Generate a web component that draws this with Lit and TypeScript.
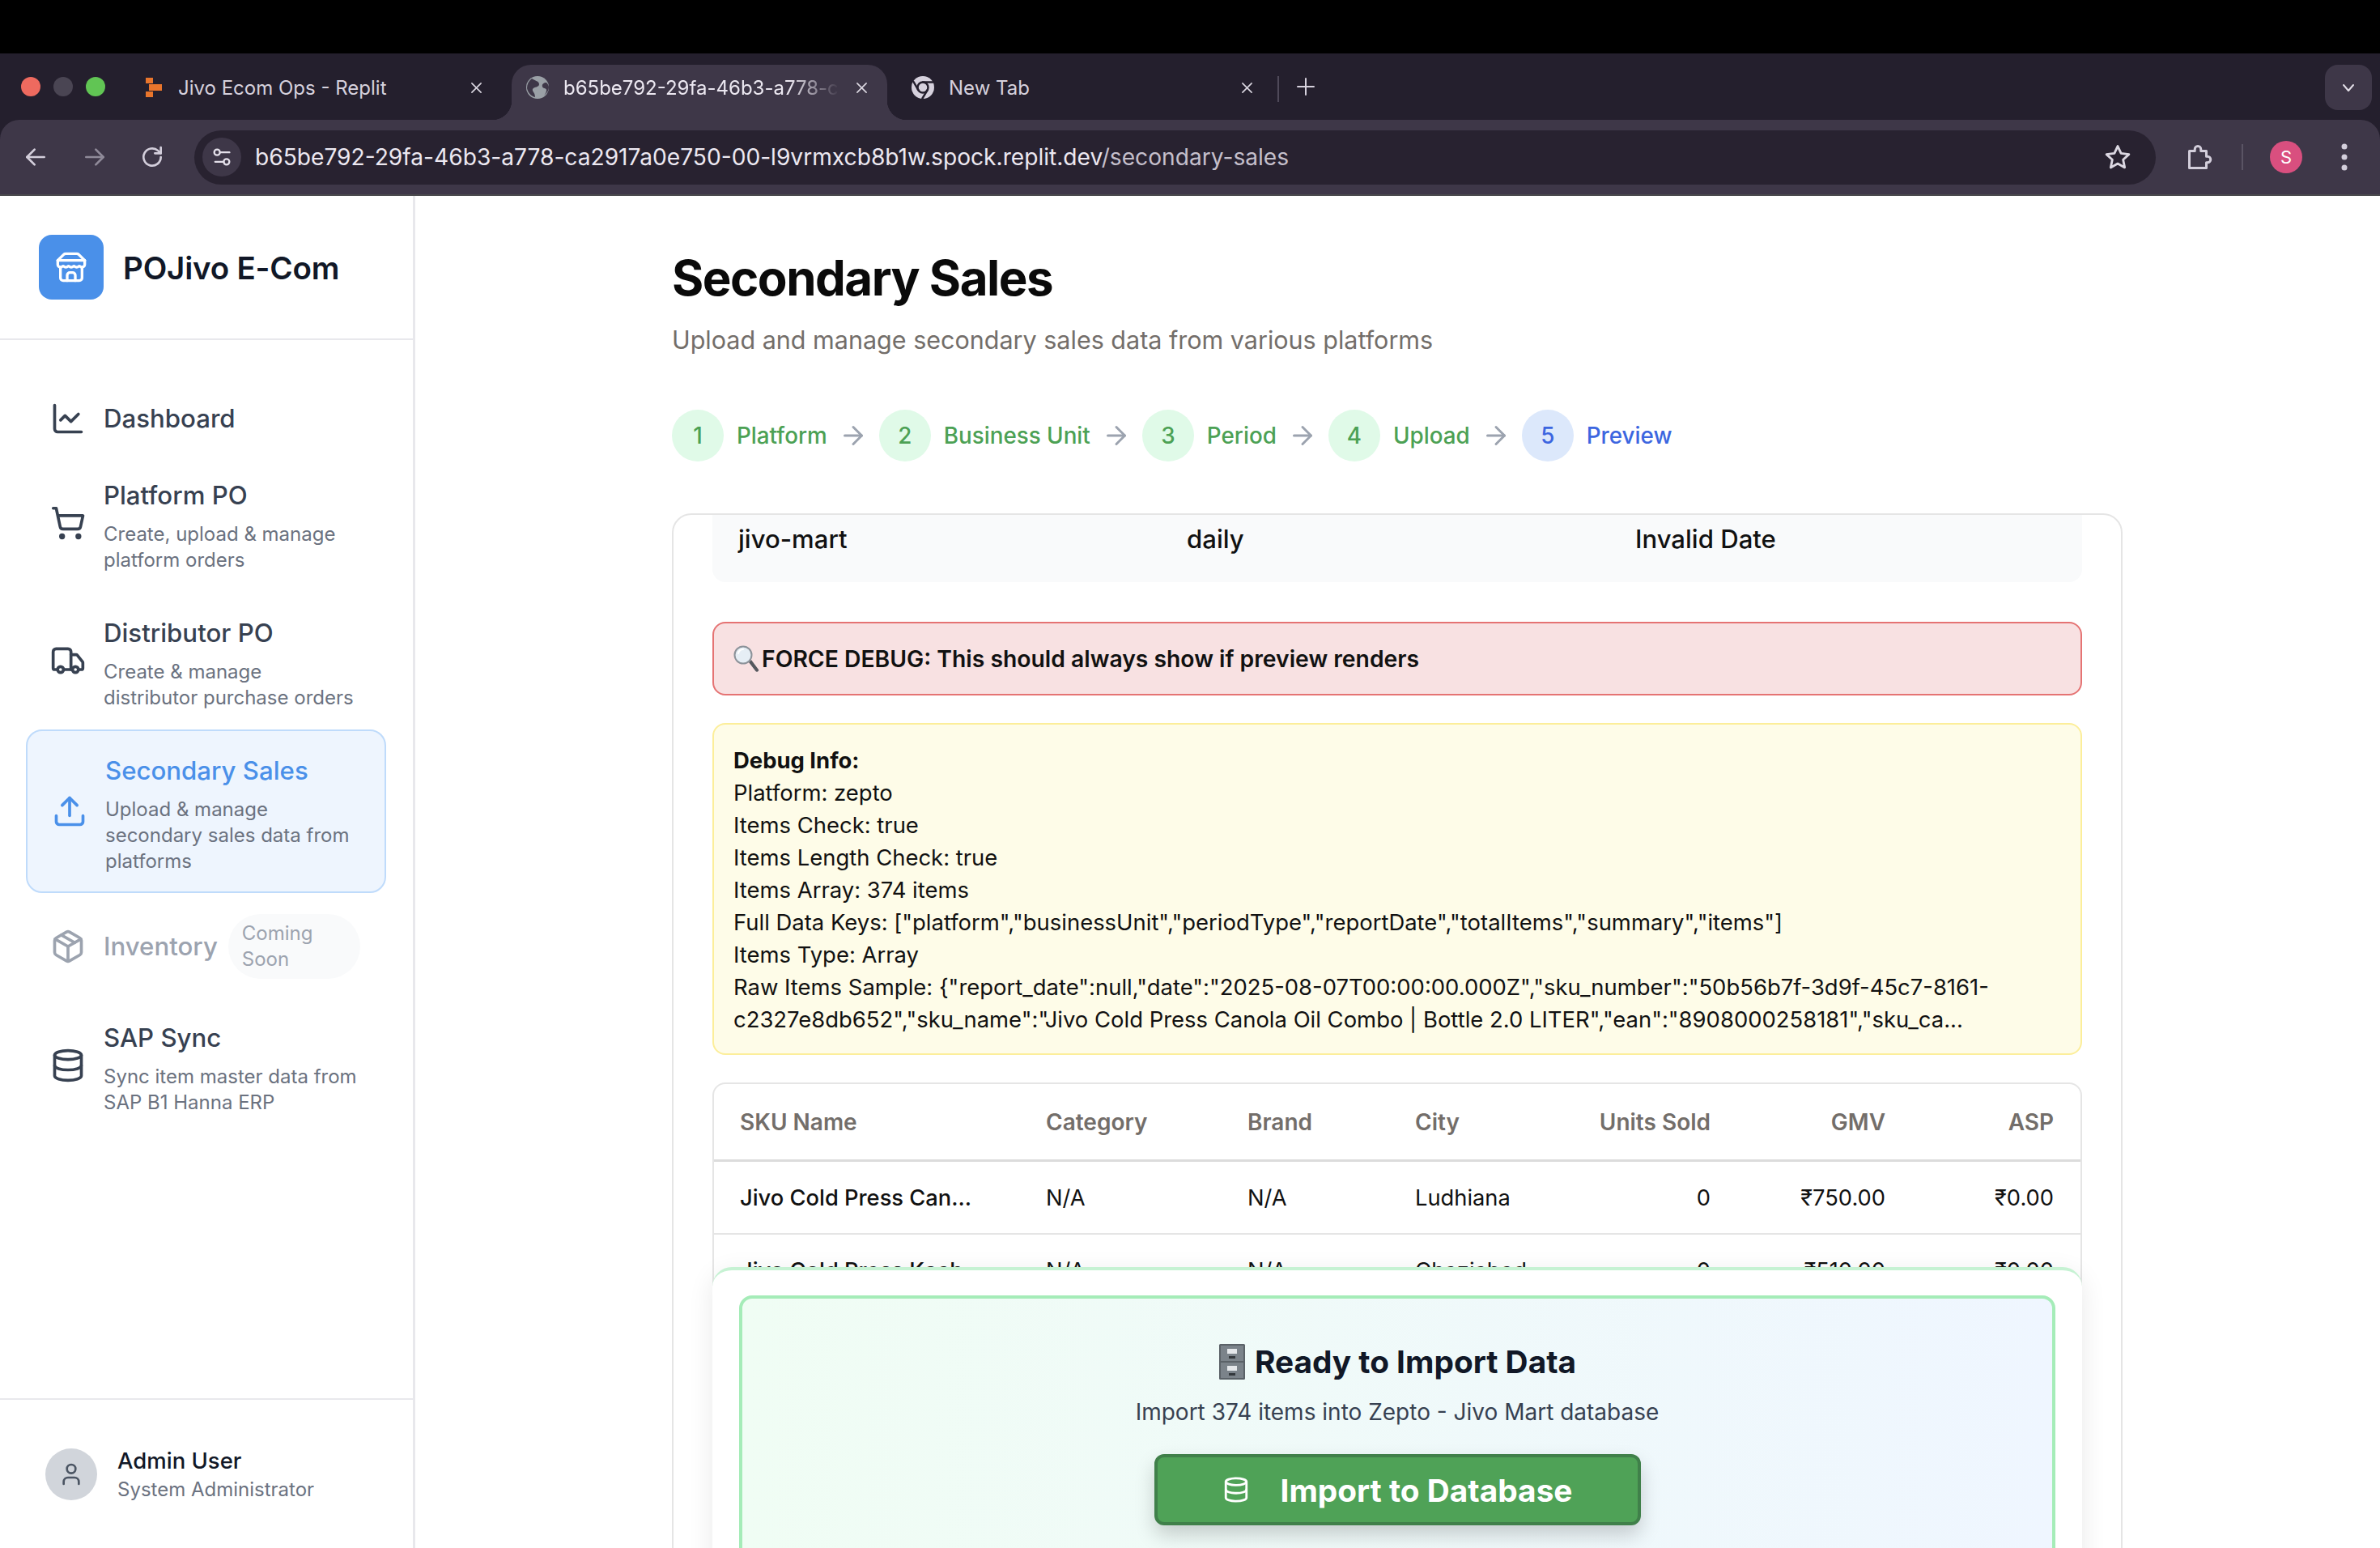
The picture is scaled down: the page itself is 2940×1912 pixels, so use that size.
import { LitElement, html, css } from "lit";
import { customElement } from "lit/decorators.js";

const ic = {
  store: html`<svg class="logo-ic" viewBox="0 0 24 24"><path d="m2 7 4.41-4.41A2 2 0 0 1 7.83 2h8.34a2 2 0 0 1 1.42.59L22 7"/><path d="M4 12v8a2 2 0 0 0 2 2h12a2 2 0 0 0 2-2v-8"/><path d="M15 22v-4a2 2 0 0 0-2-2h-2a2 2 0 0 0-2 2v4"/><path d="M2 7h20"/><path d="M22 7v3a2 2 0 0 1-2 2a2.7 2.7 0 0 1-1.59-.63.7.7 0 0 0-.82 0A2.7 2.7 0 0 1 16 12a2.7 2.7 0 0 1-1.59-.63.7.7 0 0 0-.82 0A2.7 2.7 0 0 1 12 12a2.7 2.7 0 0 1-1.59-.63.7.7 0 0 0-.82 0A2.7 2.7 0 0 1 8 12a2.7 2.7 0 0 1-1.59-.63.7.7 0 0 0-.82 0A2.7 2.7 0 0 1 4 12a2 2 0 0 1-2-2V7"/></svg>`,
  chart: html`<svg class="nav-ic" viewBox="0 0 24 24"><path d="M3 3v16a2 2 0 0 0 2 2h16"/><path d="m19 9-5 5-4-4-3 3"/></svg>`,
  cart: html`<svg class="nav-ic" viewBox="0 0 24 24"><circle cx="8" cy="21" r="1"/><circle cx="19" cy="21" r="1"/><path d="M2.05 2.05h2l2.66 12.42a2 2 0 0 0 2 1.58h9.78a2 2 0 0 0 1.95-1.57l1.65-7.43H5.12"/></svg>`,
  truck: html`<svg class="nav-ic" viewBox="0 0 24 24"><path d="M14 18V6a2 2 0 0 0-2-2H4a2 2 0 0 0-2 2v11a1 1 0 0 0 1 1h2"/><path d="M15 18H9"/><path d="M19 18h2a1 1 0 0 0 1-1v-3.65a1 1 0 0 0-.22-.624l-3.48-4.35A1 1 0 0 0 17.52 8H14"/><circle cx="17" cy="18" r="2"/><circle cx="7" cy="18" r="2"/></svg>`,
  upload: html`<svg class="nav-ic" viewBox="0 0 24 24"><path d="M21 15v4a2 2 0 0 1-2 2H5a2 2 0 0 1-2-2v-4"/><polyline points="17 8 12 3 7 8"/><line x1="12" y1="3" x2="12" y2="15"/></svg>`,
  box: html`<svg class="nav-ic" viewBox="0 0 24 24"><path d="m7.5 4.27 9 5.15"/><path d="M21 8a2 2 0 0 0-1-1.73l-7-4a2 2 0 0 0-2 0l-7 4A2 2 0 0 0 3 8v8a2 2 0 0 0 1 1.73l7 4a2 2 0 0 0 2 0l7-4A2 2 0 0 0 21 16Z"/><path d="m3.3 7 8.7 5 8.7-5"/><path d="M12 22V12"/></svg>`,
  db: html`<svg class="nav-ic" viewBox="0 0 24 24"><ellipse cx="12" cy="5" rx="9" ry="3"/><path d="M3 5V19A9 3 0 0 0 21 19V5"/><path d="M3 12A9 3 0 0 0 21 12"/></svg>`,
};

const arrow = html`<svg class="arrow" viewBox="0 0 24 24"><path d="M5 12h14"/><path d="m12 5 7 7-7 7"/></svg>`;
const closeX = html`<svg class="close" viewBox="0 0 16 16"><path d="M2 2l12 12M14 2 2 14"/></svg>`;

const steps = [
  { n: "1", label: "Platform", on: false },
  { n: "2", label: "Business Unit", on: false },
  { n: "3", label: "Period", on: false },
  { n: "4", label: "Upload", on: false },
  { n: "5", label: "Preview", on: true },
];

const debugLines = [
  "Platform: zepto",
  "Items Check: true",
  "Items Length Check: true",
  "Items Array: 374 items",
  'Full Data Keys: ["platform","businessUnit","periodType","reportDate","totalItems","summary","items"]',
  "Items Type: Array",
  'Raw Items Sample: {"report_date":null,"date":"2025-08-07T00:00:00.000Z","sku_number":"50b56b7f-3d9f-45c7-8161-',
  'c2327e8db652","sku_name":"Jivo Cold Press Canola Oil Combo | Bottle 2.0 LITER","ean":"8908000258181","sku_ca...',
];

const rows = [
  ["Jivo Cold Press Can...", "N/A", "N/A", "Ludhiana", "0", "₹750.00", "₹0.00"],
  ["Jivo Cold Press Kach...", "N/A", "N/A", "Ghaziabad", "0", "₹510.00", "₹0.00"],
];

@customElement("app-root")
export class AppRoot extends LitElement {
  static styles = css`
    :host { display: block; width: 2940px; height: 1912px; overflow: hidden; background: #fff; font-family: Inter, "Noto Sans", sans-serif; color: #111827; }
    * { box-sizing: border-box; }
    svg { fill: none; stroke: currentColor; stroke-linecap: round; stroke-linejoin: round; stroke-width: 2; flex: none; display: block; }

    .black { height: 66px; background: #000; }
    .strip { height: 82px; background: #241f2d; display: flex; align-items: flex-end; color: #d6d1dd; font-size: 24px; position: relative; }
    .lights { width: 160px; height: 68px; display: flex; gap: 16px; padding: 15px 0 0 26px; flex: none; }
    .lights i { width: 24px; height: 24px; border-radius: 50%; display: block; }
    .l1 { background: #ee6a5f; } .l2 { background: #4a4553; } .l3 { background: #61c554; }
    .tab { height: 68px; display: flex; align-items: center; padding-bottom: 12px; flex: none; position: relative; }
    .tab span { flex: 1; white-space: nowrap; overflow: hidden; }
    .t1 { width: 472px; padding-left: 20px; padding-right: 36px; }
    .t2 { width: 464px; padding-left: 18px; padding-right: 24px; background: #3e3748; border-radius: 24px 24px 0 0; color: #ece8f1; }
    .t2 span { -webkit-mask-image: linear-gradient(90deg, #000 82%, transparent 100%); mask-image: linear-gradient(90deg, #000 82%, transparent 100%); margin-right: 20px; }
    .t2::before, .t2::after { content: ""; position: absolute; bottom: 0; width: 24px; height: 24px; }
    .t2::before { left: -24px; background: radial-gradient(circle at 0 0, transparent 24px, #3e3748 24.5px); }
    .t2::after { right: -24px; background: radial-gradient(circle at 100% 0, transparent 24px, #3e3748 24.5px); }
    .t3 { width: 464px; padding-left: 30px; padding-right: 12px; }
    .fav { width: 28px; height: 28px; margin-right: 18px; stroke: none; }
    .rep { width: 20px; height: 24px; margin-right: 20px; stroke: none; }
    .close { width: 15px; height: 15px; stroke-width: 1.7; color: #dcd8e2; }
    .sep { width: 2px; height: 32px; background: #4f4959; margin: 0 0 22px 18px; flex: none; }
    .plus { width: 24px; height: 24px; margin: 0 0 29px 21px; stroke-width: 2; color: #d6d1dd; }
    .drop { position: absolute; left: 2872px; top: 14px; width: 58px; height: 56px; background: #3e3748; border-radius: 16px; display: flex; align-items: center; justify-content: center; color: #e3dfe8; }
    .drop svg { width: 16px; height: 16px; }

    .tb-wrap { background: #241f2d; }
    .toolbar { height: 94px; background: #3e3748; border-radius: 24px 24px 0 0; border-bottom: 2px solid #4a4a4d; display: flex; align-items: center; color: #d3cedb; padding-left: 28px; position: relative; }
    .tb-ic { width: 32px; height: 32px; }
    .dim { color: #8f8a99; margin-left: 41px; }
    .rel { margin-left: 39px; }
    .omni { margin-left: 36px; width: 2423px; height: 67px; background: #282230; border-radius: 34px; display: flex; align-items: center; padding-left: 10px; flex: none; }
    .tune { width: 48px; height: 48px; border-radius: 50%; background: #3e3748; display: flex; align-items: center; justify-content: center; margin-right: 17px; color: #e4e0ea; }
    .tune svg { width: 28px; height: 28px; }
    .url { font-size: 28.15px; color: #ece8f1; white-space: nowrap; flex: 1; }
    .url em { font-style: normal; color: #c4bfcb; }
    .star { width: 34px; height: 34px; margin-right: 30px; color: #dcd8e2; }
    .ext { width: 36px; height: 36px; margin-left: 34px; }
    .vsep { width: 2px; height: 32px; background: #5a5464; margin-left: 36px; }
    .ava { width: 40px; height: 40px; border-radius: 50%; background: #d94f7f; color: #fff; font-size: 22px; display: flex; align-items: center; justify-content: center; margin-left: 33px; }
    .dots { width: 8px; height: 36px; margin-left: 48px; color: #d3cedb; stroke: none; fill: currentColor; }

    .main { display: flex; height: 1670px; }
    .side { width: 513px; flex: none; border-right: 3px solid #e8e8ec; display: flex; flex-direction: column; }
    .brand { height: 178px; border-bottom: 2px solid #e8e8ec; display: flex; align-items: center; padding-left: 48px; gap: 24px; flex: none; }
    .logo { width: 80px; height: 80px; border-radius: 16px; background: #4a90e9; display: flex; align-items: center; justify-content: center; color: #fff; }
    .logo-ic { width: 40px; height: 40px; }
    .brand b { font-size: 38.5px; font-weight: 600; color: #111827; letter-spacing: -0.2px; padding-top: 2px; }
    .nav { flex: 1; padding: 46px 33px 0 32px; }
    .item { display: flex; align-items: center; padding: 21px 0 21px 28px; border: 2px solid transparent; border-radius: 20px; color: #374151; }
    .item .nav-ic { width: 44px; height: 44px; margin-right: 22px; }
    .item.dash { padding-bottom: 14px; }
    .ttl { font-size: 31.2px; font-weight: 500; line-height: 56px; color: #374151; }
    .sub { font-size: 24px; line-height: 32px; color: #6b7280; margin-top: 4px; white-space: nowrap; }
    .item.active { background: #eef5fe; border-color: #bfdbfb; color: #4a90e9; padding-left: 30px; }
    .item.active .ttl { color: #4a90e9; }
    .item.off { color: #9ca3af; padding-top: 24px; padding-bottom: 20px; }
    .item.off .ttl { color: #9ca3af; font-weight: 500; }
    .pill { margin-left: 13px; width: 163px; height: 80px; border-radius: 40px; background: #f9fafb; color: #9ca3af; font-size: 24px; line-height: 32px; padding: 8px 0 0 17px; }
    .foot { height: 185px; border-top: 2px solid #e8e8ec; display: flex; align-items: center; padding: 0 0 0 56px; gap: 25px; flex: none; }
    .avatar { width: 64px; height: 64px; border-radius: 50%; background: #d1d5db; display: flex; align-items: center; justify-content: center; color: #4b5563; }
    .avatar svg { width: 32px; height: 32px; }
    .foot .n { font-size: 27.5px; font-weight: 500; line-height: 38px; color: #111827; }
    .foot .r { font-size: 24px; line-height: 34px; color: #6b7280; }

    .content { flex: 1; padding: 65px 0 0 317px; min-width: 0; }
    h1 { margin: 0; font-size: 60px; font-weight: 700; line-height: 72px; color: #0a0a0a; letter-spacing: -1.5px; }
    .lead { margin-top: 19px; font-size: 30.5px; line-height: 44px; color: #736e6a; }
    .steps { margin-top: 64px; display: flex; align-items: center; font-size: 27.8px; font-weight: 500; color: #4ca154; }
    .step { display: flex; align-items: center; gap: 16px; }
    .num { width: 64px; height: 64px; border-radius: 50%; background: #e0fae8; display: flex; align-items: center; justify-content: center; }
    .step.on { color: #3c66e0; }
    .step.on .num { background: #dce8fb; }
    .arrow { width: 36px; height: 36px; margin: 0 14px; color: #9ca3af; }

    .card { margin-top: 64px; width: 1792px; height: 1300px; border: 2px solid #e5e5e5; border-radius: 24px 24px 0 0; overflow: hidden; position: relative; padding: 0 48px; }
    .meta { background: #f9fafb; border-radius: 0 0 16px 16px; padding: 6px 32px 29px; display: grid; grid-template-columns: repeat(3, 520px); column-gap: 34px; font-size: 31.1px; line-height: 48px; font-weight: 500; color: #111; }
    .force { margin-top: 49px; height: 91px; border: 2px solid #e57373; border-radius: 16px; background: #f8e1e2; display: flex; align-items: center; padding-left: 24px; gap: 3px; font-size: 28.3px; font-weight: 600; color: #111; }
    .force svg { width: 32px; height: 34px; stroke: none; }
    .debug { margin-top: 34px; border: 2px solid #fcee9a; border-radius: 16px; background: #fefce8; padding: 24px 24px 22px; font-size: 27.45px; line-height: 40px; color: #111; white-space: nowrap; }
    .debug b { font-weight: 700; display: block; }
    .tbl { margin-top: 34px; border: 2px solid #e5e5e5; border-radius: 16px; }
    .tr { display: grid; grid-template-columns: 378px 249px 207px 180px 185px 216px 208px; padding: 0 32px; align-items: center; font-size: 27.3px; }
    .th { height: 96px; border-bottom: 3px solid #dcdcdc; color: #736e6a; font-weight: 600; font-size: 28px; }
    .td { height: 90px; border-bottom: 2px solid #e5e5e5; color: #111; }
    .td .name { font-weight: 500; }
    .r { text-align: right; }

    .over { position: absolute; left: 48px; right: 48px; top: 929px; height: 400px; background: #fff; border-top: 4px solid #c6f2d3; border-radius: 24px 24px 0 0; padding: 31px 33px 0; box-shadow: 0 8px 32px rgba(0,0,0,.09); }
    .ready { height: 400px; border: 4px solid #a5ecb8; border-radius: 16px; background: linear-gradient(90deg, #f0fdf4, #eff6ff); display: flex; flex-direction: column; align-items: center; padding-top: 50px; }
    .ready h2 { margin: 0; font-size: 38.8px; line-height: 56px; font-weight: 700; color: #111827; display: flex; align-items: center; gap: 11px; }
    .ready h2 svg { width: 34px; height: 46px; stroke: none; }
    .ready p { margin: 14px 0 0; font-size: 28px; line-height: 40px; color: #374151; }
    .btn { margin-top: 32px; width: 601px; height: 88px; background: #4fa257; border: 4px solid #40804a; border-radius: 12px; display: flex; align-items: center; padding-left: 80px; gap: 38px; color: #fff; font-size: 38.8px; font-weight: 700; box-shadow: 0 12px 24px rgba(0,0,0,.18); }
    .btn svg { width: 34px; height: 34px; }
  `;

  private navItem(icon: unknown, title: string, sub: unknown, cls = "") {
    return html`<div class="item ${cls}">${icon}<div><div class="ttl">${title}</div><div class="sub">${sub}</div></div></div>`;
  }

  render() {
    return html`
      <div class="black"></div>
      <div class="strip">
        <div class="lights"><i class="l1"></i><i class="l2"></i><i class="l3"></i></div>
        <div class="tab t1">
          <svg class="rep" viewBox="0 0 20 24"><rect x="0" y="0" width="9" height="7" fill="#e9752c"/><rect x="4" y="8" width="16" height="8" fill="#e9752c"/><rect x="0" y="17" width="9" height="7" fill="#e9752c"/></svg>
          <span>Jivo Ecom Ops - Replit</span>${closeX}
        </div>
        <div class="tab t2">
          <svg class="fav" viewBox="0 0 28 28"><circle cx="14" cy="14" r="14" fill="#9aa0a6"/><path d="M7 3c4 3 9 3 9 7s-6 3-8 6c-1 3 3 4 3 10-5-1-9-6-10-11C1 10 3 6 7 3Z" fill="#3e3748"/><path d="M25 8c-3 0-6 2-5 5 1 3 4 1 5 4 0 2-1 5-3 7 4-3 6-7 6-10 0-2-1-4-3-6Z" fill="#3e3748"/></svg>
          <span>b65be792-29fa-46b3-a778-ca2917a0e750</span>${closeX}
        </div>
        <div class="tab t3">
          <svg class="fav" viewBox="0 0 28 28"><circle cx="14" cy="14" r="14" fill="#d6d1dd"/><circle cx="14" cy="14" r="6.5" fill="#d6d1dd" stroke="#241f2d" stroke-width="2.5"/><path d="M14 7.5h12.5M8.3 17.2 2.5 7M19.7 17.2 13.5 27.5" stroke="#241f2d" stroke-width="2.5"/></svg>
          <span>New Tab</span>${closeX}
        </div>
        <div class="sep"></div>
        <svg class="plus" viewBox="0 0 24 24"><path d="M12 2v20M2 12h20"/></svg>
        <div class="drop"><svg viewBox="0 0 16 16"><path d="M2 5l6 7 6-7"/></svg></div>
      </div>
      <div class="tb-wrap">
      <div class="toolbar">
        <svg class="tb-ic" viewBox="0 0 24 24"><path d="M20 12H4"/><path d="m11 5-7 7 7 7"/></svg>
        <svg class="tb-ic dim" viewBox="0 0 24 24"><path d="M4 12h16"/><path d="m13 5 7 7-7 7"/></svg>
        <svg class="tb-ic rel" viewBox="0 0 24 24"><path d="M20 12a8 8 0 1 1-2.6-5.9L20 8.5"/><path d="M20 3v5.5h-5.5"/></svg>
        <div class="omni">
          <div class="tune"><svg viewBox="0 0 24 24"><path d="M20 7h-9"/><path d="M14 17H5"/><circle cx="17" cy="17" r="3"/><circle cx="7" cy="7" r="3"/></svg></div>
          <div class="url">b65be792-29fa-46b3-a778-ca2917a0e750-00-l9vrmxcb8b1w.spock.replit.dev<em>/secondary-sales</em></div>
          <svg class="star" viewBox="0 0 24 24"><path d="M12 2.5l2.9 6.3 6.9.8-5.1 4.7 1.4 6.8-6.1-3.4-6.1 3.4 1.4-6.8-5.1-4.7 6.9-.8Z"/></svg>
        </div>
        <svg class="ext" viewBox="0 0 24 24"><path d="M5 7h4.5V5.5a2.5 2.5 0 0 1 5 0V7H19v4.5h1a2.5 2.5 0 0 1 0 5h-1V21H5Z"/></svg>
        <div class="vsep"></div>
        <div class="ava">S</div>
        <svg class="dots" viewBox="0 0 8 36"><circle cx="4" cy="5" r="3.5"/><circle cx="4" cy="18" r="3.5"/><circle cx="4" cy="31" r="3.5"/></svg>
      </div>
      </div>
      <div class="main">
        <aside class="side">
          <div class="brand"><div class="logo">${ic.store}</div><b>POJivo E-Com</b></div>
          <nav class="nav">
            <div class="item dash">${ic.chart}<div class="ttl">Dashboard</div></div>
            ${this.navItem(ic.cart, "Platform PO", html`Create, upload &amp; manage<br />platform orders`)}
            ${this.navItem(ic.truck, "Distributor PO", html`Create &amp; manage<br />distributor purchase orders`)}
            ${this.navItem(ic.upload, "Secondary Sales", html`Upload &amp; manage<br />secondary sales data from<br />platforms`, "active")}
            <div class="item off">${ic.box}<div class="ttl">Inventory</div><div class="pill">Coming<br />Soon</div></div>
            ${this.navItem(ic.db, "SAP Sync", html`Sync item master data from<br />SAP B1 Hanna ERP`)}
          </nav>
          <div class="foot">
            <div class="avatar"><svg viewBox="0 0 24 24"><path d="M19 21v-2a4 4 0 0 0-4-4H9a4 4 0 0 0-4 4v2"/><circle cx="12" cy="7" r="4"/></svg></div>
            <div><div class="n">Admin User</div><div class="r">System Administrator</div></div>
          </div>
        </aside>
        <main class="content">
          <h1>Secondary Sales</h1>
          <div class="lead">Upload and manage secondary sales data from various platforms</div>
          <div class="steps">
            ${steps.map((s, i) => html`
              <div class="step ${s.on ? "on" : ""}"><div class="num">${s.n}</div><div>${s.label}</div></div>
              ${i < steps.length - 1 ? arrow : ""}
            `)}
          </div>
          <section class="card">
            <div class="meta"><div>jivo-mart</div><div>daily</div><div>Invalid Date</div></div>
            <div class="force">
              <svg viewBox="0 0 32 34"><path d="M19 21l3-3 9 12c.6 1-.2 2-1 2.4-1 .5-2 .4-2.6-.4Z" fill="#55585e"/><circle cx="12" cy="12" r="10.5" fill="#e6eef5" stroke="#8c9299" stroke-width="2"/><path d="M6 10a6.5 6.5 0 0 1 6-5" stroke="#fff" stroke-width="2" fill="none"/></svg>
              FORCE DEBUG: This should always show if preview renders
            </div>
            <div class="debug">
              <b>Debug Info:</b>
              ${debugLines.map((l) => html`<div>${l}</div>`)}
            </div>
            <div class="tbl">
              <div class="tr th"><div>SKU Name</div><div>Category</div><div>Brand</div><div>City</div><div class="r">Units Sold</div><div class="r">GMV</div><div class="r">ASP</div></div>
              ${rows.map((r) => html`<div class="tr td"><div class="name">${r[0]}</div><div>${r[1]}</div><div>${r[2]}</div><div>${r[3]}</div><div class="r">${r[4]}</div><div class="r">${r[5]}</div><div class="r">${r[6]}</div></div>`)}
            </div>
            <div class="over">
              <div class="ready">
                <h2>
                  <svg viewBox="0 0 34 46"><rect x="1" y="1" width="32" height="44" rx="1.5" fill="#5b6268"/><rect x="3" y="3" width="28" height="19" fill="#7b838a"/><rect x="3" y="24" width="28" height="19" fill="#7b838a"/><rect x="11" y="7" width="12" height="6" fill="#e4e7ea"/><rect x="11" y="28" width="12" height="6" fill="#e4e7ea"/><rect x="13" y="16" width="8" height="3" fill="#33383c"/><rect x="13" y="37" width="8" height="3" fill="#33383c"/></svg>
                  Ready to Import Data
                </h2>
                <p>Import 374 items into Zepto - Jivo Mart database</p>
                <div class="btn">
                  <svg viewBox="0 0 24 24"><ellipse cx="12" cy="5" rx="9" ry="3"/><path d="M3 5V19A9 3 0 0 0 21 19V5"/><path d="M3 12A9 3 0 0 0 21 12"/></svg>
                  <span>Import to Database</span>
                </div>
              </div>
            </div>
          </section>
        </main>
      </div>
    `;
  }
}
